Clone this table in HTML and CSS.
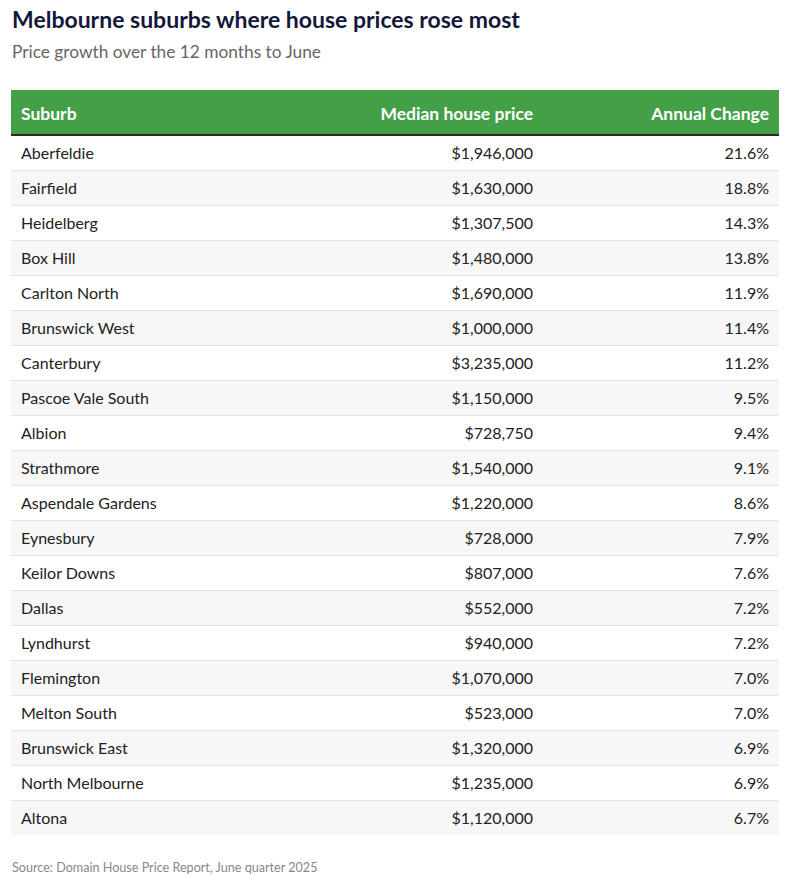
FILE: index.html
```html
<!DOCTYPE html>
<html>
<head>
<meta charset="utf-8">
<link rel="stylesheet" href="styles.css">
</head>
<body>
<div class="chart">
  <h1 class="title">Melbourne suburbs where house prices rose most</h1>
  <p class="subtitle">Price growth over the 12 months to June</p>
  <table class="tbl">
    <colgroup><col class="c1"><col class="c2"><col class="c3"></colgroup>
    <thead>
      <tr><th class="left">Suburb</th><th class="right">Median house price</th><th class="right">Annual Change</th></tr>
    </thead>
    <tbody>
      <tr><td>Aberfeldie</td><td class="right">$1,946,000</td><td class="right">21.6%</td></tr>
      <tr><td>Fairfield</td><td class="right">$1,630,000</td><td class="right">18.8%</td></tr>
      <tr><td>Heidelberg</td><td class="right">$1,307,500</td><td class="right">14.3%</td></tr>
      <tr><td>Box Hill</td><td class="right">$1,480,000</td><td class="right">13.8%</td></tr>
      <tr><td>Carlton North</td><td class="right">$1,690,000</td><td class="right">11.9%</td></tr>
      <tr><td>Brunswick West</td><td class="right">$1,000,000</td><td class="right">11.4%</td></tr>
      <tr><td>Canterbury</td><td class="right">$3,235,000</td><td class="right">11.2%</td></tr>
      <tr><td>Pascoe Vale South</td><td class="right">$1,150,000</td><td class="right">9.5%</td></tr>
      <tr><td>Albion</td><td class="right">$728,750</td><td class="right">9.4%</td></tr>
      <tr><td>Strathmore</td><td class="right">$1,540,000</td><td class="right">9.1%</td></tr>
      <tr><td>Aspendale Gardens</td><td class="right">$1,220,000</td><td class="right">8.6%</td></tr>
      <tr><td>Eynesbury</td><td class="right">$728,000</td><td class="right">7.9%</td></tr>
      <tr><td>Keilor Downs</td><td class="right">$807,000</td><td class="right">7.6%</td></tr>
      <tr><td>Dallas</td><td class="right">$552,000</td><td class="right">7.2%</td></tr>
      <tr><td>Lyndhurst</td><td class="right">$940,000</td><td class="right">7.2%</td></tr>
      <tr><td>Flemington</td><td class="right">$1,070,000</td><td class="right">7.0%</td></tr>
      <tr><td>Melton South</td><td class="right">$523,000</td><td class="right">7.0%</td></tr>
      <tr><td>Brunswick East</td><td class="right">$1,320,000</td><td class="right">6.9%</td></tr>
      <tr><td>North Melbourne</td><td class="right">$1,235,000</td><td class="right">6.9%</td></tr>
      <tr><td>Altona</td><td class="right">$1,120,000</td><td class="right">6.7%</td></tr>
    </tbody>
  </table>
  <p class="source">Source: Domain House Price Report, June quarter 2025</p>
</div>
</body>
</html>
```
FILE: styles.css
```css
* { box-sizing: border-box; }
html, body { margin: 0; padding: 0; background: #fff; }
body { font-family: "Lato", "Noto Sans", sans-serif; color: #222; }
.chart { padding: 4px 19px 0 11px; }
.title {
  margin: 0 0 0 1px;
  font-size: 23px;
  font-weight: 700;
  color: #13183a;
  line-height: 30px;
}
.subtitle {
  margin: 7px 0 0 1px;
  font-size: 17.3px;
  color: #666;
  line-height: 22px;
}
.tbl {
  margin-top: 27px;
  width: 768px;
  border-collapse: collapse;
  table-layout: fixed;
  font-size: 16px;
}
.c1 { width: 300px; }
.c2 { width: 232px; }
.c3 { width: 236px; }
.tbl th {
  background: #43a047;
  color: #fff;
  font-weight: 700;
  font-size: 17.5px;
  height: 45px;
  padding: 3px 10px 0;
  border-bottom: 2px solid #2b2b2b;
}
.tbl td {
  height: 35px;
  padding: 0 10px;
  color: #222;
  border-top: 1px solid #e4e4e4;
}
.tbl tbody tr:first-child td { border-top: none; }
.tbl tbody tr:nth-child(even) td { background: #f7f7f7; }
.left { text-align: left; }
.right { text-align: right; }
.source {
  margin: 25px 0 0 1px;
  font-size: 12.6px;
  color: #888;
}
```
